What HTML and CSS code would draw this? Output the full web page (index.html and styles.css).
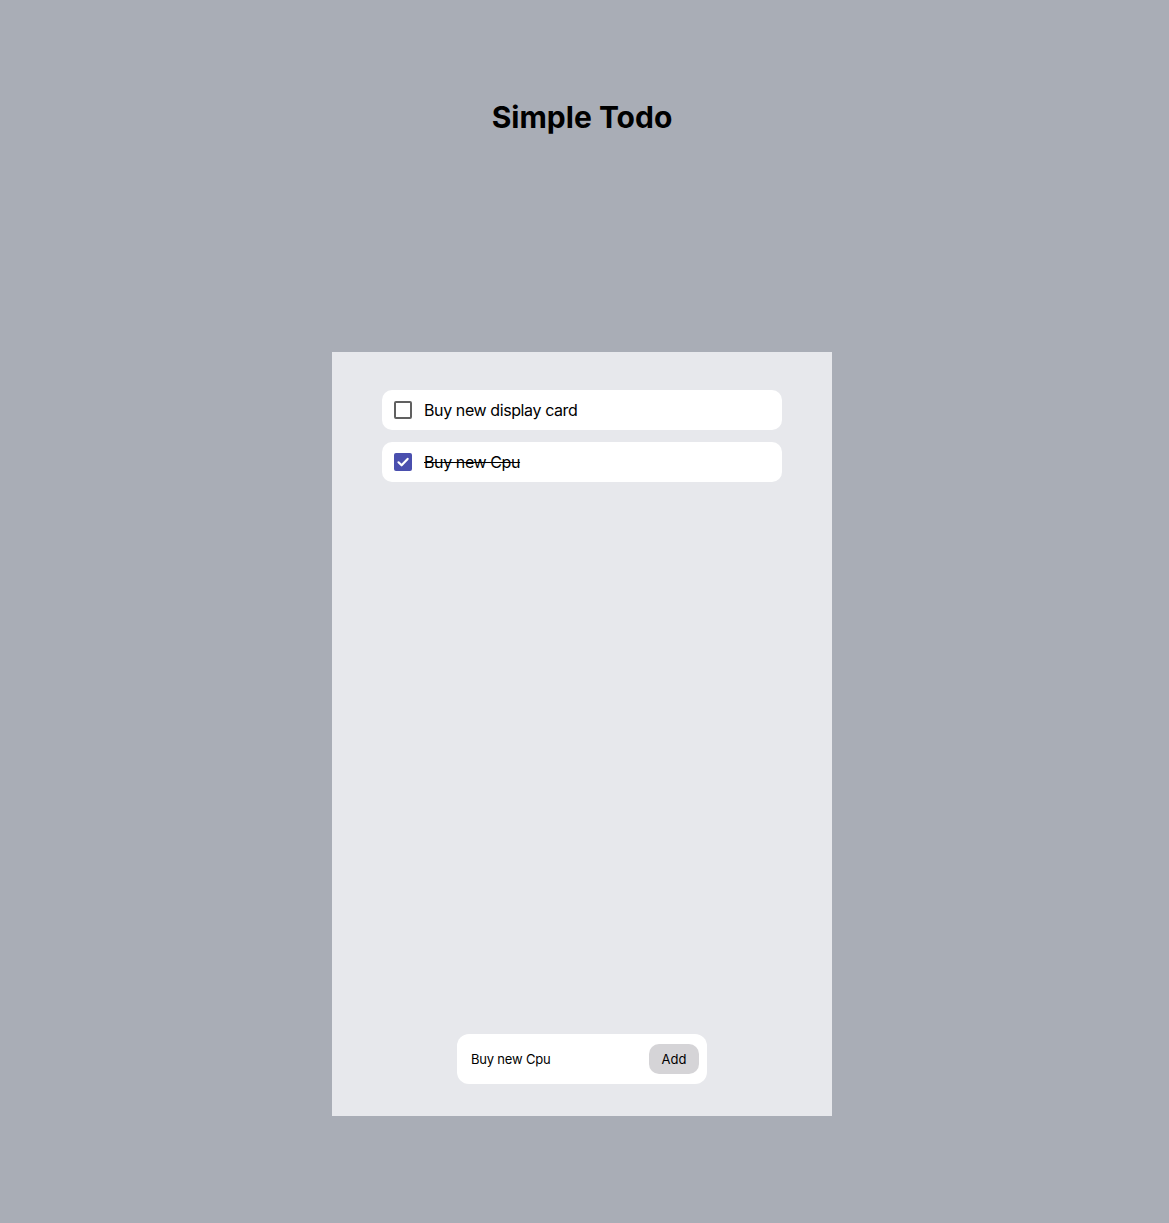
FILE: index.html
```html
<!DOCTYPE html>
<html>
<head>
<meta charset="utf-8">
<link rel="stylesheet" href="styles.css">
</head>
<body>
<div class="page">
  <h1 class="title">Simple Todo</h1>
  <div class="card">
    <ul class="list">
      <li class="item">
        <span class="box"></span>
        <span class="label">Buy new display card</span>
      </li>
      <li class="item">
        <span class="box checked">
          <svg viewBox="0 0 18 18" width="18" height="18"><path d="M4.5 9.3 L7.6 12.3 L13.6 5.9" fill="none" stroke="#fff" stroke-width="2.2" stroke-linecap="round" stroke-linejoin="round"/></svg>
        </span>
        <span class="label done">Buy new Cpu</span>
      </li>
    </ul>
    <form class="form">
      <input class="input" type="text" value="Buy new Cpu">
      <button class="btn" type="button">Add</button>
    </form>
  </div>
</div>
</body>
</html>
```
FILE: styles.css
```css
html, body {
  margin: 0;
  padding: 0;
}
body {
  background: #a9adb6;
  font-family: Inter, "Noto Sans", sans-serif;
  color: #000;
}
.page {
  display: flex;
  flex-direction: column;
  align-items: center;
  min-height: 1223px;
  padding-right: 5px;
}
.title {
  margin: 98px 0 0;
  font-size: 30px;
  line-height: 38px;
  font-weight: 700;
  letter-spacing: 0;
}
.card {
  margin-top: 216px;
  width: 500px;
  height: 764px;
  box-sizing: border-box;
  background: #e7e8ec;
  padding: 38px 50px 32px;
  display: flex;
  flex-direction: column;
  align-items: center;
}
.list {
  list-style: none;
  margin: 0;
  padding: 0;
  width: 400px;
  display: flex;
  flex-direction: column;
  gap: 12px;
  flex: 1;
}
.item {
  height: 40px;
  background: #fff;
  border-radius: 10px;
  display: flex;
  align-items: center;
  padding: 0 12px;
  gap: 12px;
}
.box {
  width: 18px;
  height: 18px;
  box-sizing: border-box;
  border: 2px solid #606060;
  border-radius: 2px;
  display: flex;
  background: #fff;
}
.box.checked {
  border: none;
  background: #4a4fae;
}
.label {
  font-size: 16px;
  letter-spacing: -0.4px;
}
.label.done {
  text-decoration: line-through;
}
.form {
  width: 250px;
  height: 50px;
  box-sizing: border-box;
  background: #fff;
  border-radius: 12px;
  display: flex;
  align-items: center;
  padding: 0 8px 0 14px;
}
.input {
  flex: 1;
  min-width: 0;
  border: none;
  outline: none;
  padding: 0;
  font-family: Inter, "Noto Sans", sans-serif;
  font-size: 13px;
  letter-spacing: -0.2px;
  color: #000;
  background: transparent;
}
.btn {
  width: 50px;
  height: 30px;
  border: none;
  border-radius: 10px;
  background: #d5d4d7;
  font-family: Inter, "Noto Sans", sans-serif;
  font-size: 13px;
  color: #000;
  padding: 0;
}
```
